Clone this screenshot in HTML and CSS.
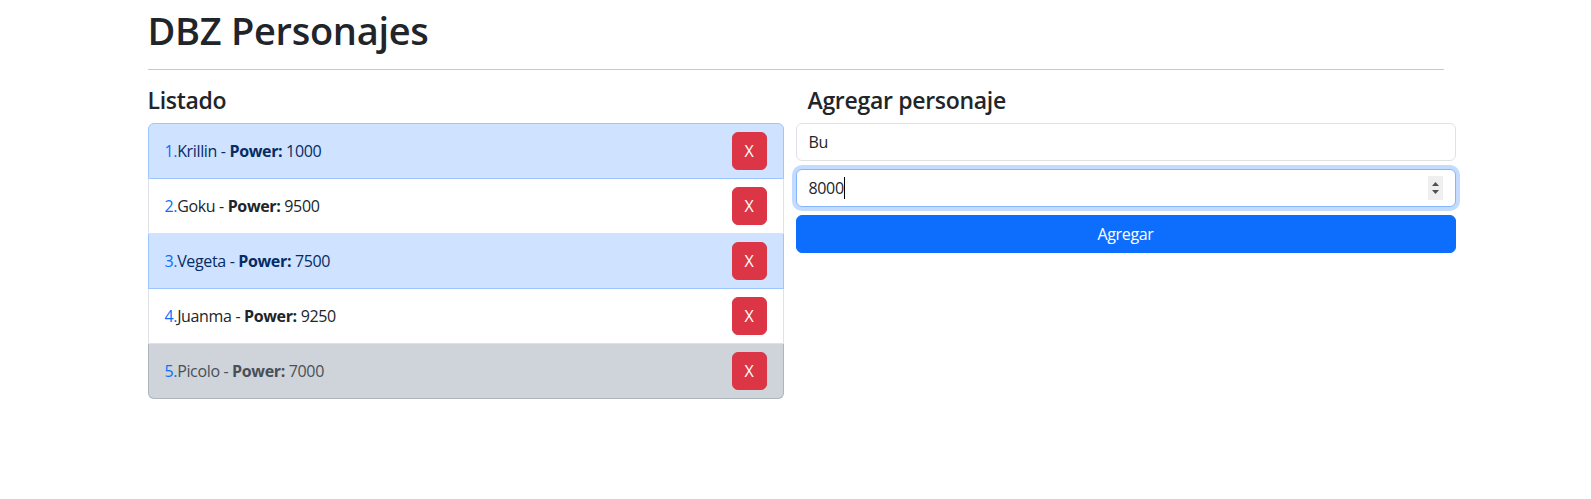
FILE: index.html
```html
<!DOCTYPE html>
<html lang="es">
<head>
<meta charset="utf-8">
<title>DBZ Personajes</title>
<link rel="stylesheet" href="styles.css">
</head>
<body>
<div class="container">
  <h1 class="title">DBZ Personajes</h1>
  <hr class="divider">
  <div class="row">
    <div class="col">
      <h4 class="section-title">Listado</h4>
      <ul class="list">
        <li class="item item-primary"><span><span class="num">1.</span>Krillin - <b>Power:</b> 1000</span><button class="btn btn-danger">X</button></li>
        <li class="item"><span><span class="num">2.</span>Goku - <b>Power:</b> 9500</span><button class="btn btn-danger">X</button></li>
        <li class="item item-primary"><span><span class="num">3.</span>Vegeta - <b>Power:</b> 7500</span><button class="btn btn-danger">X</button></li>
        <li class="item"><span><span class="num">4.</span>Juanma - <b>Power:</b> 9250</span><button class="btn btn-danger">X</button></li>
        <li class="item item-dark"><span><span class="num">5.</span>Picolo - <b>Power:</b> 7000</span><button class="btn btn-danger">X</button></li>
      </ul>
    </div>
    <div class="col">
      <h4 class="section-title">Agregar personaje</h4>
      <form class="add-form">
        <input class="form-control" type="text" value="Bu" placeholder="Nombre">
        <div class="form-control focused number-field">
          <span class="num-value">8000</span><span class="caret"></span>
          <span class="spacer"></span>
          <svg class="spinner" width="15" height="24" viewBox="0 0 15 24">
            <rect width="15" height="24" fill="#efefef"/>
            <path d="M4 10 L11 10 L7.5 6 Z" fill="#505050"/>
            <path d="M4 14 L11 14 L7.5 18 Z" fill="#505050"/>
          </svg>
        </div>
        <button type="button" class="btn btn-primary btn-block">Agregar</button>
      </form>
    </div>
  </div>
</div>
</body>
</html>
```
FILE: styles.css
```css
* { box-sizing: border-box; }
body {
  margin: 0;
  font-family: "Open Sans", "Noto Sans", sans-serif;
  font-size: 16px;
  line-height: 1.5;
  color: #212529;
  background: #fff;
  letter-spacing: -0.35px;
}
.container {
  width: 1320px;
  margin: 0 auto;
  padding: 0 12px;
}
.title {
  font-size: 38px;
  font-weight: 600;
  line-height: 48px;
  letter-spacing: -0.3px;
  margin: 0;
  padding-top: 6px;
}
.divider {
  margin: 15px 0 16px;
  border: 0;
  border-top: 1px solid #212529;
  opacity: .25;
}
.row {
  display: grid;
  grid-template-columns: 1fr 1fr;
  margin: 0 -12px;
}
.col { padding: 0 12px; }
.section-title {
  font-size: 23px;
  font-weight: 600;
  line-height: 28.8px;
  letter-spacing: -0.3px;
  margin: 0 0 8px;
}
.list {
  list-style: none;
  margin: 0;
  padding: 0;
  border-radius: 6px;
}
.item {
  display: flex;
  align-items: center;
  justify-content: space-between;
  padding: 8px 16px;
  border: 1px solid #dee2e6;
  background: #fff;
  color: #212529;
}
.item + .item { border-top-width: 0; }
.item:first-child { border-top-left-radius: 6px; border-top-right-radius: 6px; }
.item:last-child { border-bottom-left-radius: 6px; border-bottom-right-radius: 6px; }
.item-primary { background: #cfe2ff; color: #052c65; border-color: #9ec5fe; }
.item-dark { background: #ced4da; color: #495057; border-color: #adb5bd; }
.num { color: #0d6efd; }
.item b { font-weight: 700; }
.btn {
  font-family: inherit;
  font-size: 16px;
  line-height: 1.5;
  letter-spacing: inherit;
  padding: 6px 12px;
  border: 1px solid transparent;
  border-radius: 6px;
  color: #fff;
  cursor: pointer;
}
.btn-danger { background: #dc3545; border-color: #dc3545; }
.btn-primary { background: #0d6efd; border-color: #0d6efd; }
.btn-block { display: block; width: 100%; }
.add-form { margin: 0 -12px; }
.form-control {
  display: block;
  width: 100%;
  padding: 6px 12px;
  font-family: inherit;
  font-size: 16px;
  line-height: 1.5;
  letter-spacing: inherit;
  color: #212529;
  background: #fff;
  border: 1px solid #dee2e6;
  border-radius: 6px;
  margin: 0 0 8px;
  outline: none;
}
.focused {
  border-color: #86b7fe;
  box-shadow: 0 0 0 4px rgba(13, 110, 253, .25);
}
.number-field {
  display: flex;
  align-items: center;
  height: 38px;
}
.caret {
  display: inline-block;
  width: 1px;
  height: 22px;
  background: #000;
}
.spacer { flex: 1; }
.spinner { display: block; }
```
